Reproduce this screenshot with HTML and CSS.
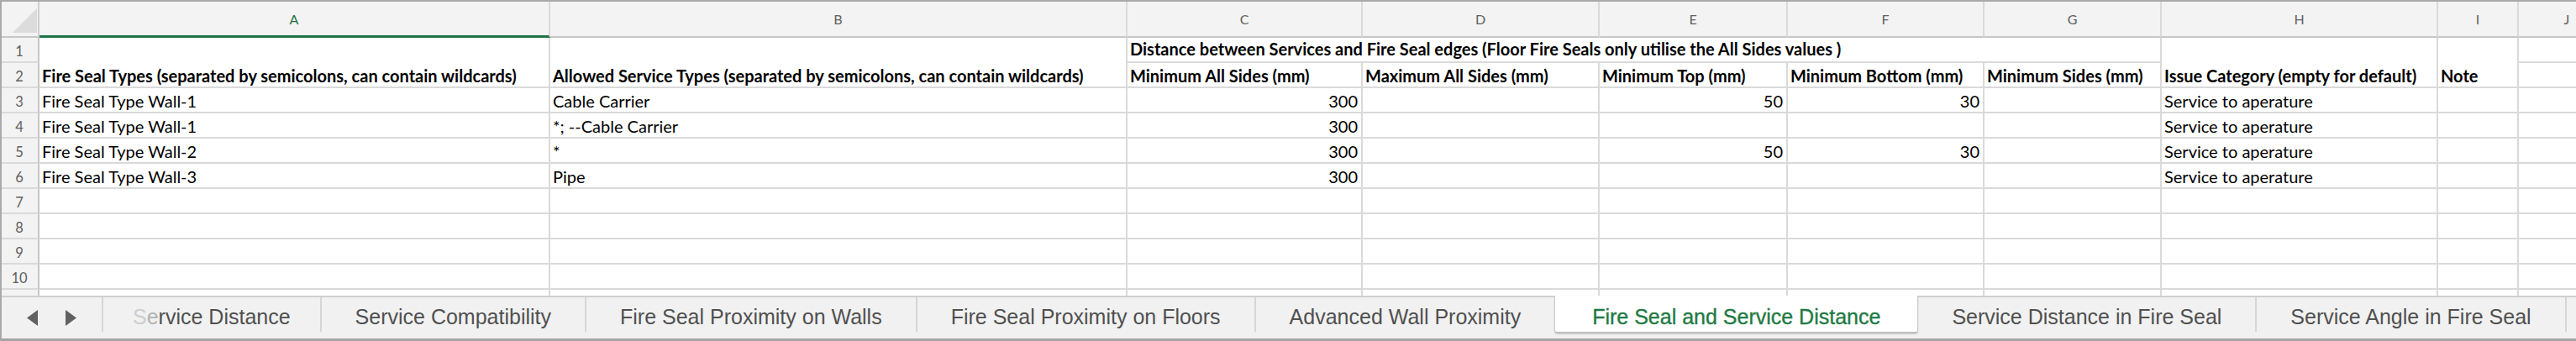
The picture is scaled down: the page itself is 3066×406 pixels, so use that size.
FILE: index.html
```html
<!DOCTYPE html>
<html>
<head>
<meta charset="utf-8">
<link rel="stylesheet" href="styles.css">
</head>
<body>
<div class="window">
  <div class="sheet">
    <div class="corner"><svg width="29" height="29" viewBox="0 0 29 29"><polygon points="0,29 29,29 29,0" fill="#dcdcdc"/></svg></div>
    <div class="colhead sel">A</div>
    <div class="colhead">B</div>
    <div class="colhead">C</div>
    <div class="colhead">D</div>
    <div class="colhead">E</div>
    <div class="colhead">F</div>
    <div class="colhead">G</div>
    <div class="colhead">H</div>
    <div class="colhead">I</div>
    <div class="colhead">J</div>

    <div class="rowhead">1</div>
    <div class="cell b span-r">Fire Seal Types (separated by semicolons, can contain wildcards)</div>
    <div class="cell b span-r">Allowed Service Types (separated by semicolons, can contain wildcards)</div>
    <div class="cell b span-c group">Distance between Services and Fire Seal edges (Floor Fire Seals only utilise the All Sides values )</div>
    <div class="cell b span-r">Issue Category (empty for default)</div>
    <div class="cell b span-r">Note</div>
    <div class="cell"></div>

    <div class="rowhead">2</div>
    <div class="cell b">Minimum All Sides (mm)</div>
    <div class="cell b">Maximum All Sides (mm)</div>
    <div class="cell b">Minimum Top (mm)</div>
    <div class="cell b">Minimum Bottom (mm)</div>
    <div class="cell b">Minimum Sides (mm)</div>
    <div class="cell"></div>

    <div class="rowhead">3</div>
    <div class="cell">Fire Seal Type Wall-1</div>
    <div class="cell">Cable Carrier</div>
    <div class="cell num">300</div>
    <div class="cell"></div>
    <div class="cell num">50</div>
    <div class="cell num">30</div>
    <div class="cell"></div>
    <div class="cell">Service to aperature</div>
    <div class="cell"></div>
    <div class="cell"></div>

    <div class="rowhead">4</div>
    <div class="cell">Fire Seal Type Wall-1</div>
    <div class="cell">*; --Cable Carrier</div>
    <div class="cell num">300</div>
    <div class="cell"></div>
    <div class="cell"></div>
    <div class="cell"></div>
    <div class="cell"></div>
    <div class="cell">Service to aperature</div>
    <div class="cell"></div>
    <div class="cell"></div>

    <div class="rowhead">5</div>
    <div class="cell">Fire Seal Type Wall-2</div>
    <div class="cell">*</div>
    <div class="cell num">300</div>
    <div class="cell"></div>
    <div class="cell num">50</div>
    <div class="cell num">30</div>
    <div class="cell"></div>
    <div class="cell">Service to aperature</div>
    <div class="cell"></div>
    <div class="cell"></div>

    <div class="rowhead">6</div>
    <div class="cell">Fire Seal Type Wall-3</div>
    <div class="cell">Pipe</div>
    <div class="cell num">300</div>
    <div class="cell"></div>
    <div class="cell"></div>
    <div class="cell"></div>
    <div class="cell"></div>
    <div class="cell">Service to aperature</div>
    <div class="cell"></div>
    <div class="cell"></div>

    <div class="rowhead">7</div>
    <div class="cell"></div><div class="cell"></div><div class="cell"></div><div class="cell"></div><div class="cell"></div><div class="cell"></div><div class="cell"></div><div class="cell"></div><div class="cell"></div><div class="cell"></div>

    <div class="rowhead">8</div>
    <div class="cell"></div><div class="cell"></div><div class="cell"></div><div class="cell"></div><div class="cell"></div><div class="cell"></div><div class="cell"></div><div class="cell"></div><div class="cell"></div><div class="cell"></div>

    <div class="rowhead">9</div>
    <div class="cell"></div><div class="cell"></div><div class="cell"></div><div class="cell"></div><div class="cell"></div><div class="cell"></div><div class="cell"></div><div class="cell"></div><div class="cell"></div><div class="cell"></div>

    <div class="rowhead">10</div>
    <div class="cell"></div><div class="cell"></div><div class="cell"></div><div class="cell"></div><div class="cell"></div><div class="cell"></div><div class="cell"></div><div class="cell"></div><div class="cell"></div><div class="cell"></div>

    <div class="rowhead partial"></div>
    <div class="cell partial"></div><div class="cell partial"></div><div class="cell partial"></div><div class="cell partial"></div><div class="cell partial"></div><div class="cell partial"></div><div class="cell partial"></div><div class="cell partial"></div><div class="cell partial"></div><div class="cell partial"></div>
  </div>

  <div class="tabbar">
    <div class="nav">
      <svg width="13" height="19" viewBox="0 0 13 19"><polygon points="13,0 13,19 0,9.5" fill="#616161"/></svg>
      <svg width="13" height="19" viewBox="0 0 13 19"><polygon points="0,0 0,19 13,9.5" fill="#616161"/></svg>
    </div>
    <div class="tab first"><span class="fade1">S</span><span class="fade2">e</span>rvice Distance</div>
    <div class="tab">Service Compatibility</div>
    <div class="tab">Fire Seal Proximity on Walls</div>
    <div class="tab">Fire Seal Proximity on Floors</div>
    <div class="tab before-active">Advanced Wall Proximity</div>
    <div class="tab active">Fire Seal and Service Distance</div>
    <div class="tab">Service Distance in Fire Seal</div>
    <div class="tab">Service Angle in Fire Seal</div>
  </div>
</div>
</body>
</html>
```

FILE: styles.css
```css
html, body {
  margin: 0;
  padding: 0;
  background: #ffffff;
}

.window {
  width: 3066px;
  height: 406px;
  box-sizing: border-box;
  border-top: 2px solid #a9a9a9;
  border-left: 2px solid #a9a9a9;
  overflow: hidden;
  display: flex;
  flex-direction: column;
}

.sheet {
  display: grid;
  grid-template-columns: 45px 608px 687px 280px 282px 224px 234px 211px 329px 96px 116px;
  grid-template-rows: 43px repeat(10, 30px) 7px;
  width: 3112px;
  flex: none;
  font-family: Lato, "Open Sans", sans-serif;
  color: #000000;
}

.corner {
  background: #f3f3f3;
  box-sizing: border-box;
  border-right: 2px solid #cfcfcf;
  border-bottom: 2px solid #c6c6c6;
  display: flex;
  justify-content: flex-end;
  align-items: flex-end;
  padding: 0 1px 4px 0;
}

.colhead {
  background: #f3f3f3;
  box-sizing: border-box;
  border-right: 2px solid #dadada;
  border-bottom: 2px solid #c6c6c6;
  display: flex;
  align-items: center;
  justify-content: center;
  font-size: 16px;
  line-height: 24px;
  color: #606060;
  padding-top: 1px;
}

.colhead.sel {
  color: #1e7145;
  border-bottom: 3px solid #217346;
}

.rowhead {
  background: #f3f3f3;
  box-sizing: border-box;
  border-right: 2px solid #c6c6c6;
  border-bottom: 2px solid #dadada;
  display: flex;
  align-items: flex-end;
  justify-content: center;
  font-size: 16.5px;
  line-height: 24px;
  color: #606060;
  padding-right: 1px;
}

.cell {
  box-sizing: border-box;
  border-right: 2px solid #dadada;
  border-bottom: 2px solid #dadada;
  display: flex;
  align-items: flex-end;
  padding: 0 4px 1px 3px;
  font-size: 20px;
  line-height: 24px;
  white-space: nowrap;
  overflow: hidden;
}

.cell.b {
  font-weight: 700;
}

.cell.num {
  justify-content: flex-end;
}

.span-r {
  grid-row: span 2;
}

.span-c {
  grid-column: span 5;
}

.group {
  padding-bottom: 3px;
  overflow: visible;
}

.partial {
  border-bottom: none;
}

.tabbar {
  height: 54px;
  box-sizing: border-box;
  flex: none;
  background: #f1f1f1;
  border-top: 2px solid #cfcfcf;
  border-bottom: 3px solid #a3a3a3;
  display: flex;
  align-items: flex-start;
  font-family: "Liberation Sans", Arial, sans-serif;
  font-size: 25px;
  color: #505050;
}

.nav {
  width: 121px;
  height: 41px;
  box-sizing: border-box;
  border-right: 2px solid #d6d6d6;
  display: flex;
  align-items: center;
  gap: 33px;
  padding: 8px 0 0 30px;
  flex: none;
}

.nav svg {
  display: block;
}

.tab {
  height: 41px;
  box-sizing: border-box;
  border-right: 2px solid #d6d6d6;
  padding: 5px 40px 0;
  display: flex;
  align-items: center;
  white-space: nowrap;
  flex: none;
}

.tab.first {
  padding-left: 35px;
  padding-right: 35px;
}

.fade1 {
  color: #cdcdcd;
}

.fade2 {
  color: #b3b3b3;
}

.tab.before-active {
  border-right: none;
}

.tab.active {
  margin-top: -2px;
  height: 45px;
  padding: 8px 44px 0;
  background: #ffffff;
  border-left: 1px solid #c9c9c9;
  border-right: 1px solid #c9c9c9;
  border-bottom: 2px solid #bdbdbd;
  border-radius: 0 0 4px 4px;
  box-shadow: 0 1px 2px rgba(0, 0, 0, 0.15);
  color: #1f7a44;
  -webkit-text-stroke: 0.35px #1f7a44;
}
```
